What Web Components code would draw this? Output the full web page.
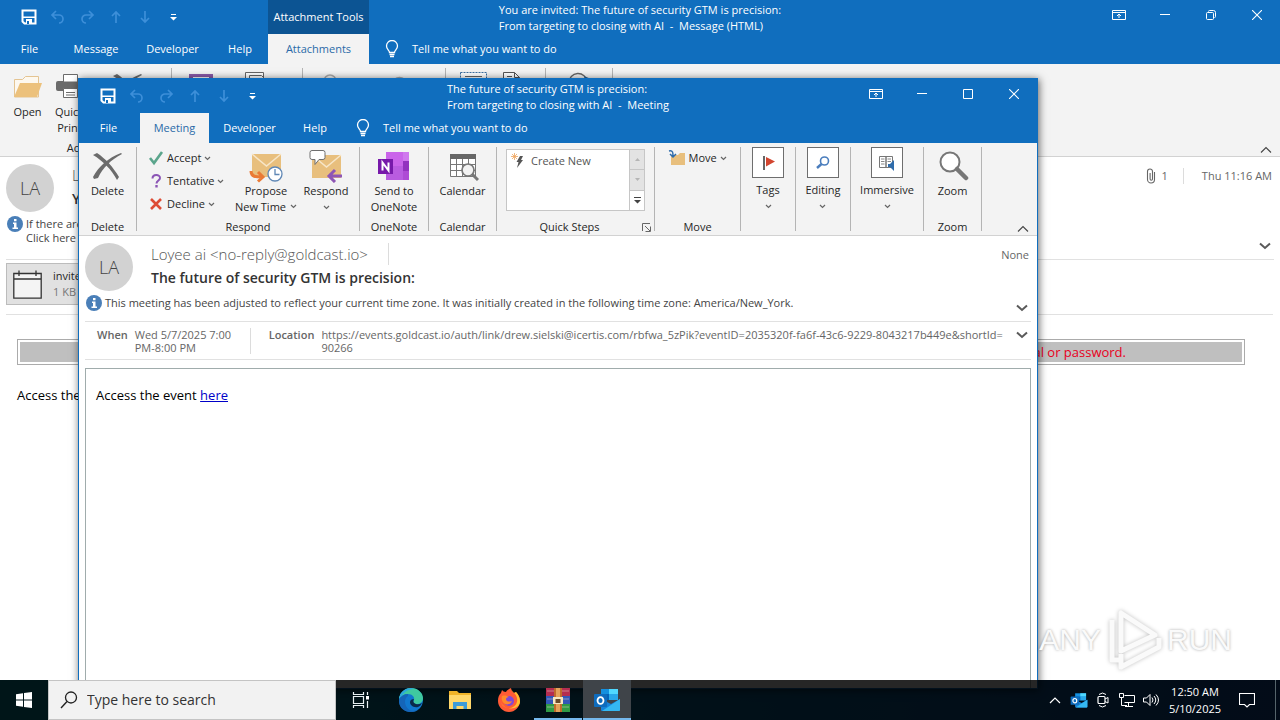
<!DOCTYPE html>
<html lang="en">
<head>
<meta charset="utf-8">
<title>Outlook</title>
<style>
  html, body { height: 100%; }
  body {
    margin: 0;
    display: flex;
    flex-direction: column;
    overflow: hidden;
    background: linear-gradient(90deg, #0090a0, #1450a0);
    color: #262626;
    font: 11px/16px "Open Sans", "Noto Sans", sans-serif;
  }
  desk-top { flex: 1; min-height: 0; }
  .banner {
    margin: 24px 35px 0 17px;
    padding: 2px;
    border: 1px solid #ababab;
  }
  .banner p {
    margin: 0;
    padding-right: 116px;
    background: #bfbfbf;
    color: #e8001c;
    font-size: 13px;
    line-height: 20px;
    text-align: right;
  }
  .message { margin: 0; color: #000; font-size: 13px; line-height: 20px; }
  .back-message { margin: 20px 17px; }
  .front-message {
    flex: 1;
    margin: 8px 6px 0;
    padding: 16px 10px;
    border: 1px solid #a0acac;
    border-bottom: 0;
  }
  .message a { color: #0000c8; }
  .attachments {
    padding: 3px 0 9px;
    margin: 0 7px 0 6px;
    border-bottom: 1px solid #e1e1e1;
  }
</style>
</head>
<body>

<desk-top>
  <app-window maximized>
    <span slot="title">You are invited: The future of security GTM is precision:<br>From targeting to closing with AI&nbsp; -&nbsp; Message (HTML)</span>
    <context-tab slot="context">Attachment Tools</context-tab>
    <ribbon-tab slot="tabs" style="--tab-width: 59px">File</ribbon-tab>
    <ribbon-tab slot="tabs" style="--tab-width: 70px">Message</ribbon-tab>
    <ribbon-tab slot="tabs" style="--tab-width: 79px">Developer</ribbon-tab>
    <ribbon-tab slot="tabs" style="--tab-width: 52px">Help</ribbon-tab>
    <ribbon-tab slot="tabs" style="--tab-width: 101px" selected>Attachments</ribbon-tab>

    <ribbon-group slot="ribbon" label="Actions" style="--group-width: 172px">
      <ribbon-button icon="folder" style="--button-width: 42px">Open</ribbon-button>
      <ribbon-button icon="printer" style="--button-width: 42px">Quick<br>Print</ribbon-button>
      <ribbon-button icon="delete" style="--button-width: 74px" name="Remove attachment"></ribbon-button>
    </ribbon-group>
    <ribbon-group slot="ribbon" style="--group-width: 131px; --group-align: start">
      <ribbon-button icon="disk" style="--button-width: 58px" name="Save as"></ribbon-button>
      <ribbon-button icon="copies" style="--button-width: 56px" name="Save all"></ribbon-button>
    </ribbon-group>
    <ribbon-group slot="ribbon" style="--group-width: 143px; --group-align: start">
      <ribbon-button icon="ring" style="--button-width: 54px" name="Upload"></ribbon-button>
      <ribbon-button icon="cloud" style="--button-width: 84px" name="Upload all"></ribbon-button>
    </ribbon-group>
    <ribbon-group slot="ribbon" style="--group-width: 100px; --group-align: start">
      <ribbon-button icon="select" style="--button-width: 54px" name="Select all"></ribbon-button>
      <ribbon-button icon="page" style="--button-width: 38px" name="Copy"></ribbon-button>
    </ribbon-group>
    <ribbon-group slot="ribbon" style="--group-width: 67px">
      <ribbon-button icon="return" style="--button-width: 60px" name="Show message"></ribbon-button>
    </ribbon-group>

    <message-header initials="LA">
      <span slot="sender">L</span>
      <span slot="subject">Y</span>
      <message-meta slot="aside" count="1">Thu 11:16 AM</message-meta>
    </message-header>
    <info-bar style="--info-space: 14px">If there are<br>Click here</info-bar>
    <div class="attachments"><attachment-chip size="1 KB">invite</attachment-chip></div>
    <div class="banner"><p>al or password.</p></div>
    <p class="message back-message">Access the</p>
  </app-window>

  <app-window class="front">
    <span slot="title">The future of security GTM is precision:<br>From targeting to closing with AI&nbsp; -&nbsp; Meeting</span>
    <ribbon-tab slot="tabs" style="--tab-width: 59px">File</ribbon-tab>
    <ribbon-tab slot="tabs" style="--tab-width: 69px" selected>Meeting</ribbon-tab>
    <ribbon-tab slot="tabs" style="--tab-width: 77px">Developer</ribbon-tab>
    <ribbon-tab slot="tabs" style="--tab-width: 50px">Help</ribbon-tab>

    <ribbon-group slot="ribbon" label="Delete" style="--group-width: 58px">
      <ribbon-button icon="delete">Delete</ribbon-button>
    </ribbon-group>
    <ribbon-group slot="ribbon" label="Respond" style="--group-width: 223px">
      <ribbon-stack style="--stack-width: 84px">
        <small-button icon="accept" menu>Accept</small-button>
        <small-button icon="tentative" menu>Tentative</small-button>
        <small-button icon="decline" menu>Decline</small-button>
      </ribbon-stack>
      <ribbon-button icon="propose" style="--button-width: 68px" menu="inline">Propose<br>New Time</ribbon-button>
      <ribbon-button icon="respond" style="--button-width: 52px" menu="below">Respond</ribbon-button>
    </ribbon-group>
    <ribbon-group slot="ribbon" label="OneNote" style="--group-width: 69px">
      <ribbon-button icon="onenote">Send to<br>OneNote</ribbon-button>
    </ribbon-group>
    <ribbon-group slot="ribbon" label="Calendar" style="--group-width: 68px">
      <ribbon-button icon="calendar">Calendar</ribbon-button>
    </ribbon-group>
    <ribbon-group slot="ribbon" label="Quick Steps" launcher style="--group-width: 158px">
      <quick-steps>Create New</quick-steps>
    </ribbon-group>
    <ribbon-group slot="ribbon" label="Move" style="--group-width: 86px">
      <ribbon-stack style="--stack-width: 64px">
        <small-button icon="move" menu>Move</small-button>
      </ribbon-stack>
    </ribbon-group>
    <ribbon-group slot="ribbon" style="--group-width: 55px">
      <ribbon-button icon="flag" boxed menu="below">Tags</ribbon-button>
    </ribbon-group>
    <ribbon-group slot="ribbon" style="--group-width: 55px">
      <ribbon-button icon="find" boxed menu="below">Editing</ribbon-button>
    </ribbon-group>
    <ribbon-group slot="ribbon" style="--group-width: 73px">
      <ribbon-button icon="reader" boxed menu="below">Immersive</ribbon-button>
    </ribbon-group>
    <ribbon-group slot="ribbon" label="Zoom" style="--group-width: 58px">
      <ribbon-button icon="zoom">Zoom</ribbon-button>
    </ribbon-group>

    <message-header initials="LA" divided>
      <span slot="sender">Loyee ai &lt;no-reply@goldcast.io&gt;</span>
      <span slot="subject">The future of security GTM is precision:</span>
      <span slot="aside">None</span>
    </message-header>
    <info-bar>This meeting has been adjusted to reflect your current time zone. It was initially created in the following time zone: America/New_York.</info-bar>
    <meeting-fields>
      <span slot="when">Wed 5/7/2025 7:00 PM-8:00 PM</span>
      <span slot="where">https://events.goldcast.io/auth/link/drew.sielski@icertis.com/rbfwa_5zPik?eventID=2035320f-fa6f-43c6-9229-8043217b449e&amp;shortId=<wbr>90266</span>
    </meeting-fields>
    <p class="message front-message">Access the event <a href="#event">here</a></p>
  </app-window>

  <brand-mark></brand-mark>
</desk-top>

<task-bar></task-bar>

<script>
const X_SHAPE = `<path d="M2 5l4-2c9 6 16 14 22 24l-2 3C20 19 12 11 2 5z" fill="#6b6b6b"/><path d="M31 4C20 10 12 17 7 28l-4 1-1-2C8 16 17 8 30 3z" fill="#6b6b6b"/>`;
const ENVELOPE = `<rect x="3" y="4" width="29" height="23" fill="#e8bf7d"/><path d="M3 4l14.500 12L32 4" fill="none" stroke="#f7e6c8" stroke-width="1.500"/>`;
const OUTLOOK = `<path d="M8 2h17v11H8z" fill="#1490df"/><path d="M16 2h9v5h-9z" fill="#50d9ff"/><path d="M16 7h9v6h-9z" fill="#28a8ea"/><path d="M8 7h8v6H8z" fill="#0364b8"/><path d="M8 12l10 5 9-5v11a1 1 0 0 1-1 1H9a1 1 0 0 1-1-1z" fill="#1683d9"/><path d="M27 12L9 24h17a1 1 0 0 0 1-1z" fill="#35b8f1"/><rect x="1" y="7" width="13" height="13" rx="1" fill="#0f6cbd"/><ellipse cx="7.500" cy="13.500" rx="3" ry="3.400" fill="none" stroke="#fff" stroke-width="1.800"/>`;

// name: [width, height, markup]
const ICONS = {
  save: [16, 16, `<path d="M1.500 1.500h13v13h-11l-2-2z" fill="none" stroke="#fff" stroke-width="2"/><path d="M2 7.500h12v1.500H2zM5 10h6v5H5z" fill="#fff"/><path d="M6 12h2v3H6z" fill="#106ebe"/>`],
  undo: [16, 16, `<path d="M6 2L2 6l4 4M2 6h7a4 4 0 0 1 0 8" fill="none" stroke="#3d8fd9" stroke-width="1.700"/>`],
  redo: [16, 16, `<path d="M10 2l4 4-4 4M14 6H7a4 4 0 0 0 0 8" fill="none" stroke="#3d8fd9" stroke-width="1.700"/>`],
  up: [16, 16, `<path d="M8 14V3M4 7l4-4 4 4" fill="none" stroke="#3d8fd9" stroke-width="1.700"/>`],
  down: [16, 16, `<path d="M8 2v11M4 9l4 4 4-4" fill="none" stroke="#3d8fd9" stroke-width="1.700"/>`],
  more: [7, 7, `<path d="M1 0h5v1H1zM0 3h7L3.500 6.500z" fill="#fff"/>`],
  display: [14, 12, `<path d="M.5 1.500h13v9H.5zM.5 3.500h13M7 9V5M5 7l2-2 2 2" fill="none" stroke="#fff"/>`],
  minimize: [10, 10, `<path d="M0 4.500h10" stroke="#fff"/>`],
  maximize: [10, 10, `<path d="M.5.5h9v9h-9z" fill="none" stroke="#fff"/>`],
  restore: [10, 10, `<rect x=".5" y="2.500" width="7" height="7" rx="1" fill="none" stroke="#fff"/><path d="M2.500 1.500q0-1 1-1h4q2 0 2 2v4q0 1-1 1" fill="none" stroke="#fff"/>`],
  close: [10, 10, `<path d="M0 0l10 10M10 0L0 10" stroke="#fff" stroke-width="1.100"/>`],
  bulb: [14, 18, `<path d="M4.500 12.500c0-2-3-3-3-6.500a5 5 0 0 1 11 0c0 3.500-3 4.500-3 6.500zM4.500 14.500h5M5 16.500h4" fill="none" stroke="#fff" stroke-width="1.300"/>`],
  caret: [7, 5, `<path d="M1 1l2.500 2.500L6 1" fill="none" stroke="#666" stroke-width="1.200"/>`],
  expand: [12, 8, `<path d="M1 1.500l5 4.500 5-4.500" fill="none" stroke="#5a5a5a" stroke-width="2"/>`],
  collapse: [12, 8, `<path d="M1 6.500l5-5 5 5" fill="none" stroke="#444" stroke-width="1.100"/>`],
  launcher: [9, 9, `<path d="M.5 8V.5H8M3 3l5 5M8.500 3.500v5h-5" fill="none" stroke="#666"/>`],
  folder: [32, 32, `<path d="M2.500 26V8.500h8l3-3h13V26z" fill="#fdf8ef" stroke="#e4c492"/><path d="M2 26l6-14h22l-5 14z" fill="#ecc17c"/>`],
  printer: [32, 32, `<path d="M4 10h26q2 0 2 2v8H4q-2 0-2-2v-6q0-2 2-2z" fill="#6b6b6b"/><path d="M9.500 3.500h14V11h-14zM9.500 17.500h14v9h-14z" fill="#fff" stroke="#6b6b6b"/><path d="M12 21.500h9M12 24h9" stroke="#6b6b6b"/>`],
  delete: [33, 32, X_SHAPE],
  disk: [32, 32, `<path d="M4 3h24v25H4z" fill="#8a5aa8"/><path d="M8 6h16v9H8z" fill="#fff"/>`],
  copies: [32, 32, `<path d="M3.500 1.500h18v24h-18z" fill="#fff" stroke="#666"/><path d="M7.500 4.500h12l5 5v19h-17z" fill="#fff" stroke="#666"/>`],
  ring: [32, 32, `<path d="M10 10a6 6 0 0 1 12 0" fill="none" stroke="#aaa" stroke-width="1.500"/>`],
  cloud: [32, 32, `<path d="M10 12a6 5 0 0 1 13 0" fill="none" stroke="#aaa" stroke-width="1.500"/>`],
  select: [32, 32, `<path d="M3.500 1.500h26v26h-26z" fill="#fff" stroke="#3a6ea0" stroke-dasharray="2 1"/><path d="M8 5.500h17M8 10h17" stroke="#666"/>`],
  page: [32, 32, `<path d="M.5 1.500h11l5 5v20H.5z" fill="#fff" stroke="#555"/><path d="M11.500 1.500v5h5M4 5.500h5" fill="none" stroke="#555"/>`],
  return: [32, 32, `<path d="M6 12a9 9 0 0 1 18-1" fill="none" stroke="#666" stroke-width="1.300"/><path d="M21 5l7 3-5 4z" fill="#2d5f8b"/>`],
  accept: [16, 16, `<path d="M2 8l4 5L14 2" fill="none" stroke="#5ba58c" stroke-width="2.600"/>`],
  tentative: [16, 16, `<path d="M4.500 5.500C4.500 1 12 1 12 5c0 2.500-3.500 2.500-3.500 5.500" fill="none" stroke="#8b55b5" stroke-width="2"/><path d="M7.300 12h2.400v2.500H7.300z" fill="#8b55b5"/>`],
  decline: [16, 16, `<path d="M3 3l10 10M13 3L3 13" stroke="#dd4c35" stroke-width="2.600"/>`],
  propose: [34, 32, `${ENVELOPE}<circle cx="26" cy="24" r="7" fill="#fff" stroke="#5f87b5" stroke-width="1.300"/><path d="M26 19v5.500h4.500" fill="none" stroke="#5f87b5" stroke-width="1.300"/><path d="M2 21c0 6 5 6 11 6M9 22l5 5-5 4.500" fill="none" stroke="#ea7a35" stroke-width="3"/>`],
  respond: [34, 32, `<g transform="translate(0 1)">${ENVELOPE}</g><path d="M3 .5h11q2 0 2 2v5q0 2-2 2h-4l-4 5v-5H3q-2 0-2-2v-5q0-2 2-2z" fill="#fff" stroke="#6f6f6f"/><path d="M33 26H20M26 20l-6 6 6 6" fill="none" stroke="#8f56b5" stroke-width="3"/>`],
  onenote: [34, 32, `<path d="M9 2h18v28H9z" fill="#ca64ea"/><path d="M9 16h18v14H9z" fill="#b95ce0"/><path d="M26 2h6v9h-6z" fill="#d078ee"/><path d="M26 11h6v10h-6z" fill="#9332bf"/><path d="M26 21h6v9h-6z" fill="#ae4bd5"/><rect x="1" y="9" width="15" height="15" fill="#7719aa"/><path d="M5.500 20.500v-8l6 8v-8" fill="none" stroke="#fff" stroke-width="2"/>`],
  calendar: [32, 32, `<path d="M3 4h26v5H3z" fill="#666"/><path d="M3.500 9v17.500h25V9M3 14.500h26M3 20.500h26M9.500 9v17M15.500 9v17M21.500 9v17" fill="#fff" stroke="#777"/><circle cx="21" cy="20" r="6" fill="#f3f3f3" stroke="#777" stroke-width="1.700"/><path d="M25 24l6 6" stroke="#777" stroke-width="3"/>`],
  bolt: [14, 16, `<path d="M9 3h3l-2 4h2l-6 8 1.500-6H5.500z" fill="#555"/><path d="M3.500 0v7M0 3.500h7M1 1l5 5M6 1L1 6" stroke="#f0a45c" stroke-width=".8"/>`],
  move: [18, 16, `<path d="M3 5h7l2-2h5v12H3z" fill="#e8bf7d"/><path d="M1 1c4-1 4 2 4 5M2 4l3 3 3-3" fill="none" stroke="#2f6cab" stroke-width="1.500"/>`],
  flag: [16, 16, `<path d="M3 1h2v14H3z" fill="#666"/><path d="M6 2l9 4.500-9 5z" fill="#d2452f"/>`],
  find: [16, 16, `<circle cx="9.500" cy="6" r="4" fill="#fff" stroke="#4a7dbd" stroke-width="1.600"/><path d="M6.500 9L2 13" stroke="#4a7dbd" stroke-width="2.400"/>`],
  reader: [18, 16, `<path d="M1.500 1.500H8v11H1.500zM8 1.500h6.500v11H8z" fill="#fff" stroke="#777"/><path d="M3 4h3.500M3 6.500h3.500M3 9h3.500M9.500 4H13M9.500 6.500H13" stroke="#888"/><path d="M10 9h2l4-4v11l-4-4h-2z" fill="#2f6cab"/>`],
  zoom: [32, 32, `<circle cx="13" cy="12" r="9.500" fill="#fff" stroke="#777" stroke-width="2"/><path d="M20 19l9 9" stroke="#777" stroke-width="4.500" stroke-linecap="round"/>`],
  info: [16, 16, `<circle cx="8" cy="8" r="8" fill="#4a7fb8"/><path d="M7 3h2.500v2.300H7zM6 6.500h3.500v5H11V13H5.500v-1.500H7V8H6z" fill="#fff"/>`],
  clip: [10, 16, `<path d="M8.500 4v7.500a3.500 3.500 0 0 1-7 0V3.500a2.500 2.500 0 0 1 5 0V11a1.200 1.200 0 0 1-2.400 0V5" fill="none" stroke="#666" stroke-width="1.100"/>`],
  event: [29, 29, `<path d="M.8 3.500h27.400v24.700H.8zM.8 9h27.400M6 .5V6M23 .5V6" fill="#f4f4f4" stroke="#333" stroke-width="1.300"/>`],
  windows: [16, 16, `<path d="M0 2.300l7-1V7.500H0zM8 1.100L16 0v7.500H8zM0 8.500h7v6.200l-7-1zM8 8.500h8V16l-8-1.100z" fill="#fff"/>`],
  search: [18, 18, `<circle cx="11" cy="6.500" r="5.500" fill="none" stroke="#222" stroke-width="1.300"/><path d="M7 10.500L1 17" stroke="#222" stroke-width="1.400"/>`],
  taskview: [18, 16, `<path d="M1.500 4.500h10v7h-10zM1.500 0v2.500h10V0M1.500 16v-2.500h10V16M15.500 0v3M15.500 9v7" fill="none" stroke="#e8f0f2" stroke-width="1.200"/><path d="M14 4h3v3.500h-3z" fill="#fff"/>`],
  edge: [24, 24, `<circle cx="12" cy="12" r="12" fill="#1178cf"/><path d="M0 11C1 4 6 0 12 0c7 0 12 5 12 10 0 4-3 6-6 6-4 0-4-2-3-4 1-3-2-6-6-6-4 0-7 2-9 5z" fill="#3fc9a0"/><path d="M0 11C1 4 6 0 12 0l3 1C9 1 5 4 3 8z" fill="#2ba7dc"/><path d="M9 8c-3 2-4 6-2 10 2 5 8 6 13 3-2 2-5 3-8 3C4 24-1 18 0 11c2-3 5-5 9-5z" fill="#1565b8"/><path d="M15 11c-1 2-1 4 2 5 2 .6 4 0 6-1-1 2-2 3-4 4-5 1-8-2-8-5 0-2 2-3 4-3z" fill="#0a2a4a"/>`],
  explorer: [24, 24, `<path d="M1 3h8l2 2h12v16H1z" fill="#f0b429"/><path d="M1 7h22v14H1z" fill="#ffd86b"/><path d="M5 21v-7h14v7h-3.500v-3h-7v3z" fill="#3c9bd9"/>`],
  firefox: [24, 24, `<path d="M5 2c1 1 2 2 4 2 1-2 3-3 5-4 0 2 1 3 3 5l2-1c3 3 4 6 4 9 0 6-5 11-11 11S1 19 1 13c0-4 1-6 3-8z" fill="#ff5b35"/><path d="M14 0c0 3 5 5 6 10s-2 9-7 10C8 20 5 18 4 14c2 8 18 9 19 0 0-3-1-7-4-10l-2 1c-2-2-3-3-3-5z" fill="#ffbd2e"/><circle cx="12" cy="13" r="5" fill="#8048d6"/><path d="M5 8c3-1 5 0 7 1-2 0-3 1-3 2 0 3 4 3 6 2-1 3-4 4-7 3-3-2-4-5-3-8z" fill="#ff8a2a"/>`],
  winrar: [24, 24, `<path d="M0 0h24v8H0z" fill="#b52d50"/><path d="M0 8h24v8H0z" fill="#3357b8"/><path d="M0 16h24v8H0z" fill="#2f9a46"/><path d="M1 3h22M1 11h22M1 19h22" stroke="#e8d9c8" stroke-opacity=".5"/><path d="M8 0h8v24H8z" fill="#c06a2c"/><path d="M10 0h4v24h-4z" fill="#e5a25a"/><path d="M7 9h10v7H7z" fill="#f5e6c0"/><path d="M9.500 11h5v4h-5z" fill="#6a4a2a"/>`],
  outlook: [28, 26, OUTLOOK],
  trayUp: [12, 8, `<path d="M1 7l5-5 5 5" fill="none" stroke="#fff" stroke-width="1.200"/>`],
  camera: [12, 16, `<rect x="1" y="4.500" width="7" height="7" rx="1" fill="none" stroke="#fff" stroke-width="1.200"/><path d="M8 7l3-1.500v5.500l-3-1.500M2 2.500q3.500-3 7 0M2 13.500q3.500 3 7 0" fill="none" stroke="#fff"/>`],
  network: [16, 14, `<path d="M5.500 2.500h10v7h-10M9.500 10v3M6 13.500h8M.5.5h4v4h-4zM2.500 5v7.500H8" fill="none" stroke="#fff"/>`],
  speaker: [16, 14, `<path d="M.5 5h3l3.500-3.500v11L3.500 9h-3zM9 4.500q2 2.500 0 5M11 3q3.500 4 0 8M13 1.500q5 5.500 0 11" fill="none" stroke="#fff"/>`],
  note: [16, 16, `<path d="M.5 1.500h15v11h-5L8 15l-2.500-2.500h-5z" fill="none" stroke="#fff" stroke-width="1.100"/>`]
};

const RESET = `
  *, *::before { box-sizing: border-box; }
  button {
    margin: 0;
    padding: 0;
    border: 0;
    background: none;
    color: inherit;
    font: inherit;
  }
`;

class UiIcon extends HTMLElement {
  constructor() {
    super();
    this.attachShadow({ mode: "open" });
  }

  connectedCallback() {
    const [width, height, shape] = ICONS[this.getAttribute("name")];
    const w = this.getAttribute("width") || width;
    this.shadowRoot.innerHTML = `
      <style>
        :host { display: inline-flex; flex: none; }
        svg { display: block; }
      </style>
      <svg width="${w}" viewBox="0 0 ${width} ${height}" aria-hidden="true">${shape}</svg>
    `;
  }
}
customElements.define("ui-icon", UiIcon);

class DeskTop extends HTMLElement {
  constructor() {
    super();
    this.attachShadow({ mode: "open" });
    this.shadowRoot.innerHTML = `
      <style>
        :host { display: flex; position: relative; }
        ::slotted(app-window[maximized]) { flex: 1; }
        /* the floating window runs down behind the translucent task bar */
        ::slotted(app-window.front) {
          position: absolute;
          top: 78px;
          left: 78px;
          right: 242px;
          bottom: -9px;
        }
        ::slotted(brand-mark) { position: absolute; right: 48px; bottom: 8px; }
      </style>
      <slot></slot>
    `;
  }
}
customElements.define("desk-top", DeskTop);

class AppWindow extends HTMLElement {
  constructor() {
    super();
    this.attachShadow({ mode: "open" });
  }

  connectedCallback() {
    const size = this.hasAttribute("maximized") ? "restore" : "maximize";
    const quick = ["save", "undo", "redo", "up", "down", "more"];
    const controls = ["display", "minimize", size, "close"];
    const buttons = (names) =>
      names.map((n) => `<button aria-label="${n}"><ui-icon name="${n}"></ui-icon></button>`).join("");
    this.shadowRoot.innerHTML = `
      <style>
        ${RESET}
        :host {
          box-sizing: border-box;
          display: flex;
          flex-direction: column;
          min-width: 0;
          background: #fff;
        }
        :host(:not([maximized])) {
          border: 1px solid #106ebe;
          box-shadow: 1px 1px 8px rgba(0,0,0,0.6);
        }
        header {
          display: grid;
          grid-template-columns: 1fr auto 1fr;
          height: 34px;
          background: #106ebe;
          color: #fff;
        }
        .quick, .controls { display: flex; min-width: 0; }
        .quick { padding-left: 14px; }
        .quick button {
          display: flex;
          align-items: center;
          justify-content: center;
          width: 29px;
        }
        .controls { justify-content: flex-end; }
        .controls button {
          display: flex;
          align-items: center;
          justify-content: center;
          width: 46px;
          height: 30px;
        }
        .title { padding-top: 2px; white-space: nowrap; }
        nav {
          display: flex;
          gap: 2px;
          height: 30px;
          background: #106ebe;
          color: #fff;
        }
        .tell {
          display: flex;
          align-items: center;
          gap: 13px;
          margin-left: 14px;
        }
        .ribbon {
          display: flex;
          height: 93px;
          border-bottom: 1px solid #d2d2d2;
          background: #f3f3f3;
        }
        .collapse { display: flex; margin: auto 8px 2px auto; }
        main {
          flex: 1;
          display: flex;
          flex-direction: column;
          min-height: 0;
        }
      </style>
      <header>
        <div class="quick">${buttons(quick)}<slot name="context"></slot></div>
        <div class="title"><slot name="title"></slot></div>
        <div class="controls">${buttons(controls)}</div>
      </header>
      <nav>
        <slot name="tabs"></slot>
        <button class="tell"><ui-icon name="bulb"></ui-icon>Tell me what you want to do</button>
      </nav>
      <div class="ribbon">
        <slot name="ribbon"></slot>
        <button class="collapse" aria-label="Collapse the ribbon"><ui-icon name="collapse"></ui-icon></button>
      </div>
      <main><slot></slot></main>
    `;
  }
}
customElements.define("app-window", AppWindow);

class ContextTab extends HTMLElement {
  constructor() {
    super();
    this.attachShadow({ mode: "open" });
    this.shadowRoot.innerHTML = `
      <style>
        :host {
          display: flex;
          align-items: center;
          justify-content: center;
          flex: none;
          width: 101px;
          margin-left: 80px;
          background: #0c5493;
        }
      </style>
      <slot></slot>
    `;
  }
}
customElements.define("context-tab", ContextTab);

class RibbonTab extends HTMLElement {
  constructor() {
    super();
    this.attachShadow({ mode: "open" });
    this.shadowRoot.innerHTML = `
      <style>
        ${RESET}
        :host { display: flex; flex: none; width: var(--tab-width); }
        button { flex: 1; }
        :host([selected]) button { background: #f3f3f3; color: #2a6aa8; }
      </style>
      <button><slot></slot></button>
    `;
  }
}
customElements.define("ribbon-tab", RibbonTab);

class RibbonGroup extends HTMLElement {
  constructor() {
    super();
    this.attachShadow({ mode: "open" });
  }

  connectedCallback() {
    const launcher = this.hasAttribute("launcher")
      ? `<button aria-label="More"><ui-icon name="launcher"></ui-icon></button>` : "";
    this.shadowRoot.innerHTML = `
      <style>
        ${RESET}
        :host {
          box-sizing: border-box;
          display: flex;
          flex-direction: column;
          flex: none;
          width: var(--group-width);
          margin: 4px 0;
          border-right: 1px solid #b4b4b4;
        }
        .items {
          flex: 1;
          display: flex;
          justify-content: var(--group-align, center);
          min-height: 0;
        }
        /* the label line hangs a little below the divider */
        footer {
          display: flex;
          justify-content: center;
          align-items: center;
          height: 16px;
          margin-bottom: -4px;
        }
        span { flex: 1; text-align: center; }
        footer button { display: flex; margin-right: 3px; }
      </style>
      <div class="items"><slot></slot></div>
      <footer><span>${this.getAttribute("label") || ""}</span>${launcher}</footer>
    `;
  }
}
customElements.define("ribbon-group", RibbonGroup);

class RibbonButton extends HTMLElement {
  constructor() {
    super();
    this.attachShadow({ mode: "open" });
  }

  connectedCallback() {
    const menu = this.getAttribute("menu");
    const name = this.getAttribute("name");
    const caret = `<ui-icon name="caret"></ui-icon>`;
    this.shadowRoot.innerHTML = `
      <style>
        ${RESET}
        :host { display: block; flex: none; width: var(--button-width, auto); }
        button {
          display: flex;
          flex-direction: column;
          align-items: center;
          width: 100%;
        }
        .picture { display: flex; height: 36px; padding-top: 2px; }
        :host([boxed]) .picture {
          align-items: center;
          justify-content: center;
          width: 32px;
          height: 31px;
          margin-bottom: 4px;
          padding: 0;
          border: 1px solid #6e6e6e;
          background: #fff;
        }
        .label { white-space: nowrap; }
        .label ui-icon { margin-left: 4px; vertical-align: 2px; }
        .below { padding-top: 6px; display: flex; }
      </style>
      <button ${name ? `aria-label="${name}"` : ""}>
        <span class="picture"><ui-icon name="${this.getAttribute("icon")}"></ui-icon></span>
        <span class="label"><slot></slot>${menu === "inline" ? caret : ""}</span>
        ${menu === "below" ? `<span class="below">${caret}</span>` : ""}
      </button>
    `;
  }
}
customElements.define("ribbon-button", RibbonButton);

class RibbonStack extends HTMLElement {
  constructor() {
    super();
    this.attachShadow({ mode: "open" });
    this.shadowRoot.innerHTML = `
      <style>
        :host {
          display: flex;
          flex-direction: column;
          width: var(--stack-width);
          margin-left: 4px;
        }
      </style>
      <slot></slot>
    `;
  }
}
customElements.define("ribbon-stack", RibbonStack);

class SmallButton extends HTMLElement {
  constructor() {
    super();
    this.attachShadow({ mode: "open" });
  }

  connectedCallback() {
    this.shadowRoot.innerHTML = `
      <style>
        ${RESET}
        :host { display: block; height: 23px; }
        button { display: flex; align-items: center; gap: 3px; height: 22px; }
      </style>
      <button>
        <ui-icon name="${this.getAttribute("icon")}"></ui-icon>
        <slot></slot>
        <ui-icon name="caret"></ui-icon>
      </button>
    `;
  }
}
customElements.define("small-button", SmallButton);

class QuickSteps extends HTMLElement {
  constructor() {
    super();
    this.attachShadow({ mode: "open" });
    this.shadowRoot.innerHTML = `
      <style>
        ${RESET}
        :host {
          display: flex;
          box-sizing: border-box;
          width: 139px;
          height: 62px;
          margin-top: 2px;
          border: 1px solid #c6c6c6;
          background: #fff;
          color: #555;
        }
        .step {
          flex: 1;
          display: flex;
          align-items: center;
          gap: 6px;
          height: 22px;
          padding-left: 4px;
        }
        .scroll { display: flex; flex-direction: column; width: 15px; }
        .scroll button {
          flex: 1;
          display: flex;
          align-items: center;
          justify-content: center;
          border-left: 1px solid #c6c6c6;
          background: #e3e3e3;
        }
        .scroll button + button { border-top: 1px solid #c6c6c6; }
        .scroll .more { background: #fff; }
        .arrow { fill: #b5b5b5; }
        .more svg { fill: #444; }
      </style>
      <button class="step"><ui-icon name="bolt"></ui-icon><slot></slot></button>
      <div class="scroll">
        <button aria-label="Previous"><svg class="arrow" width="5" height="3"><path d="M0 3L2.500 0 5 3z"/></svg></button>
        <button aria-label="Next"><svg class="arrow" width="5" height="3"><path d="M0 0l2.500 3L5 0z"/></svg></button>
        <button class="more" aria-label="More"><svg width="7" height="7"><path d="M0 0h7v1H0zM0 3h7L3.500 6.500z"/></svg></button>
      </div>
    `;
  }
}
customElements.define("quick-steps", QuickSteps);

class MessageHeader extends HTMLElement {
  constructor() {
    super();
    this.attachShadow({ mode: "open" });
  }

  connectedCallback() {
    this.shadowRoot.innerHTML = `
      <style>
        :host { display: flex; padding: 7px 8px 0 6px; }
        .avatar {
          display: flex;
          align-items: center;
          justify-content: center;
          flex: none;
          width: 48px;
          height: 48px;
          border-radius: 50%;
          background: #d2d2d2;
          color: #444;
          font-size: 18px;
          font-weight: 300;
        }
        .lines { flex: 1; margin-left: 18px; min-width: 0; }
        .sender {
          display: inline-block;
          padding-right: 20px;
          color: #555;
          font-size: 15px;
          line-height: 22px;
          font-weight: 300;
        }
        :host([divided]) .sender { border-right: 1px solid #dcdcdc; }
        .subject { color: #333; font-size: 14px; line-height: 26px; font-weight: 600; }
        .aside { padding-top: 4px; color: #666; }
      </style>
      <div class="avatar">${this.getAttribute("initials")}</div>
      <div class="lines">
        <div class="sender"><slot name="sender"></slot></div>
        <div class="subject"><slot name="subject"></slot></div>
      </div>
      <div class="aside"><slot name="aside"></slot></div>
    `;
  }
}
customElements.define("message-header", MessageHeader);

class MessageMeta extends HTMLElement {
  constructor() {
    super();
    this.attachShadow({ mode: "open" });
  }

  connectedCallback() {
    this.shadowRoot.innerHTML = `
      <style>
        :host { display: flex; align-items: center; }
        .count { display: flex; gap: 6px; padding-right: 15px; border-right: 1px solid #dcdcdc; }
        .time { padding-left: 18px; white-space: nowrap; }
      </style>
      <span class="count"><ui-icon name="clip"></ui-icon>${this.getAttribute("count")}</span>
      <span class="time"><slot></slot></span>
    `;
  }
}
customElements.define("message-meta", MessageMeta);

class InfoBar extends HTMLElement {
  constructor() {
    super();
    this.attachShadow({ mode: "open" });
    this.shadowRoot.innerHTML = `
      <style>
        ${RESET}
        :host {
          display: flex;
          align-items: flex-start;
          gap: 3px;
          margin: 0 6px;
          padding: 4px 3px 0 1px;
          border-bottom: 1px solid #e1e1e1;
          color: #444;
          line-height: 14px;
        }
        p { flex: 1; margin: 0; padding: 1px 0 var(--info-space, 11px); }
        button { display: flex; align-self: flex-end; margin-bottom: 9px; }
      </style>
      <ui-icon name="info"></ui-icon>
      <p><slot></slot></p>
      <button aria-label="Expand"><ui-icon name="expand"></ui-icon></button>
    `;
  }
}
customElements.define("info-bar", InfoBar);

class MeetingFields extends HTMLElement {
  constructor() {
    super();
    this.attachShadow({ mode: "open" });
    this.shadowRoot.innerHTML = `
      <style>
        ${RESET}
        :host {
          display: block;
          margin: 0 6px;
          padding: 6px 3px 5px 12px;
          border-bottom: 1px solid #e1e1e1;
          color: #666;
          line-height: 13px;
        }
        .fields { display: flex; }
        dl { flex: 1; display: flex; margin: 0; min-width: 0; }
        dt { font-weight: 600; margin-right: 7px; }
        dd { margin: 0; }
        .when { width: 116px; padding-right: 18px; border-right: 1px solid #dcdcdc; margin-right: 18px; }
        .where { flex: 1; min-width: 0; }
        button { display: flex; align-self: flex-start; margin-top: 3px; }
      </style>
      <div class="fields">
        <dl>
          <dt>When</dt><dd class="when"><slot name="when"></slot></dd>
          <dt>Location</dt><dd class="where"><slot name="where"></slot></dd>
        </dl>
        <button aria-label="Expand"><ui-icon name="expand"></ui-icon></button>
      </div>
    `;
  }
}
customElements.define("meeting-fields", MeetingFields);

class AttachmentChip extends HTMLElement {
  constructor() {
    super();
    this.attachShadow({ mode: "open" });
  }

  connectedCallback() {
    this.shadowRoot.innerHTML = `
      <style>
        ${RESET}
        :host { display: block; width: 180px; }
        button {
          display: flex;
          align-items: center;
          gap: 11px;
          width: 100%;
          height: 42px;
          padding-left: 6px;
          border: 1px solid #bcbcbc;
          background: #e1e1e1;
          text-align: left;
        }
        small { display: block; color: #777; font-size: 11px; }
      </style>
      <button>
        <ui-icon name="event"></ui-icon>
        <span><slot></slot><small>${this.getAttribute("size")}</small></span>
      </button>
    `;
  }
}
customElements.define("attachment-chip", AttachmentChip);

class BrandMark extends HTMLElement {
  constructor() {
    super();
    this.attachShadow({ mode: "open" });
    this.shadowRoot.innerHTML = `
      <style>
        :host {
          display: flex;
          align-items: center;
          gap: 5px;
          color: #fafafa;
          font: 30px/64px "Liberation Sans", sans-serif;
          text-shadow: 0 0 3px rgba(0,0,0,0.35);
          pointer-events: none;
        }
        svg { filter: drop-shadow(0 0 2px rgba(0,0,0,0.25)); }
      </style>
      <span>ANY</span>
      <svg width="56" height="64" viewBox="0 0 56 64" fill="none" stroke="#fafafa" stroke-width="5" stroke-linejoin="round" aria-hidden="true">
        <path d="M15 5v38l34-16z"/>
        <path d="M6 12v40h8M15 46v13l38-20v-9"/>
      </svg>
      <span>RUN</span>
    `;
  }
}
customElements.define("brand-mark", BrandMark);

class TaskBar extends HTMLElement {
  constructor() {
    super();
    this.attachShadow({ mode: "open" });
    const app = (name, label, state) =>
      `<button class="app ${state || ""}" aria-label="${label}"><ui-icon name="${name}"></ui-icon></button>`;
    this.shadowRoot.innerHTML = `
      <style>
        ${RESET}
        :host {
          position: relative;
          display: flex;
          align-items: stretch;
          height: 40px;
          background: rgba(0,0,0,0.85);
          color: #fff;
        }
        button { display: flex; align-items: center; justify-content: center; }
        .start { width: 48px; }
        label {
          display: flex;
          align-items: center;
          gap: 9px;
          width: 288px;
          padding-left: 11px;
          border: 1px solid #c4c4c4;
          background: #f2f2f2;
        }
        input {
          flex: 1;
          min-width: 0;
          padding: 0;
          border: 0;
          outline: 0;
          background: none;
          font: 14px/20px "Open Sans", "Noto Sans", sans-serif;
        }
        input::placeholder { color: #333; opacity: 1; }
        .apps { display: flex; gap: 1px; }
        .app { width: 48px; border-bottom: 2px solid transparent; padding-top: 2px; }
        .view { width: 50px; }
        .running { border-color: #76b9ed; }
        .active { background: #3f4449; border-color: #76b9ed; }
        .tray { display: flex; align-items: center; margin-left: auto; }
        .tray button { width: 24px; height: 40px; }
        .clock { width: 64px; text-align: center; line-height: 17px; }
        .tray .note { width: 40px; }
        .edge { width: 5px; height: 40px; margin-left: 8px; border-left: 1px solid #56646a; }
      </style>
      <button class="start" aria-label="Start"><ui-icon name="windows"></ui-icon></button>
      <label><ui-icon name="search"></ui-icon><input type="text" placeholder="Type here to search" aria-label="Search"></label>
      <div class="apps">
        ${app("taskview", "Task view", "view")}
        ${app("edge", "Edge")}
        ${app("explorer", "File Explorer")}
        ${app("firefox", "Firefox")}
        ${app("winrar", "WinRAR", "running")}
        ${app("outlook", "Outlook", "active")}
      </div>
      <div class="tray">
        <button aria-label="Hidden icons"><ui-icon name="trayUp"></ui-icon></button>
        <button aria-label="Outlook"><ui-icon name="outlook" width="18"></ui-icon></button>
        <button aria-label="Meet now"><ui-icon name="camera"></ui-icon></button>
        <button aria-label="Network"><ui-icon name="network"></ui-icon></button>
        <button aria-label="Volume"><ui-icon name="speaker"></ui-icon></button>
        <div class="clock">12:50 AM<br>5/10/2025</div>
        <button class="note" aria-label="Notifications"><ui-icon name="note"></ui-icon></button>
        <div class="edge"></div>
      </div>
    `;
  }
}
customElements.define("task-bar", TaskBar);
</script>
</body>
</html>
